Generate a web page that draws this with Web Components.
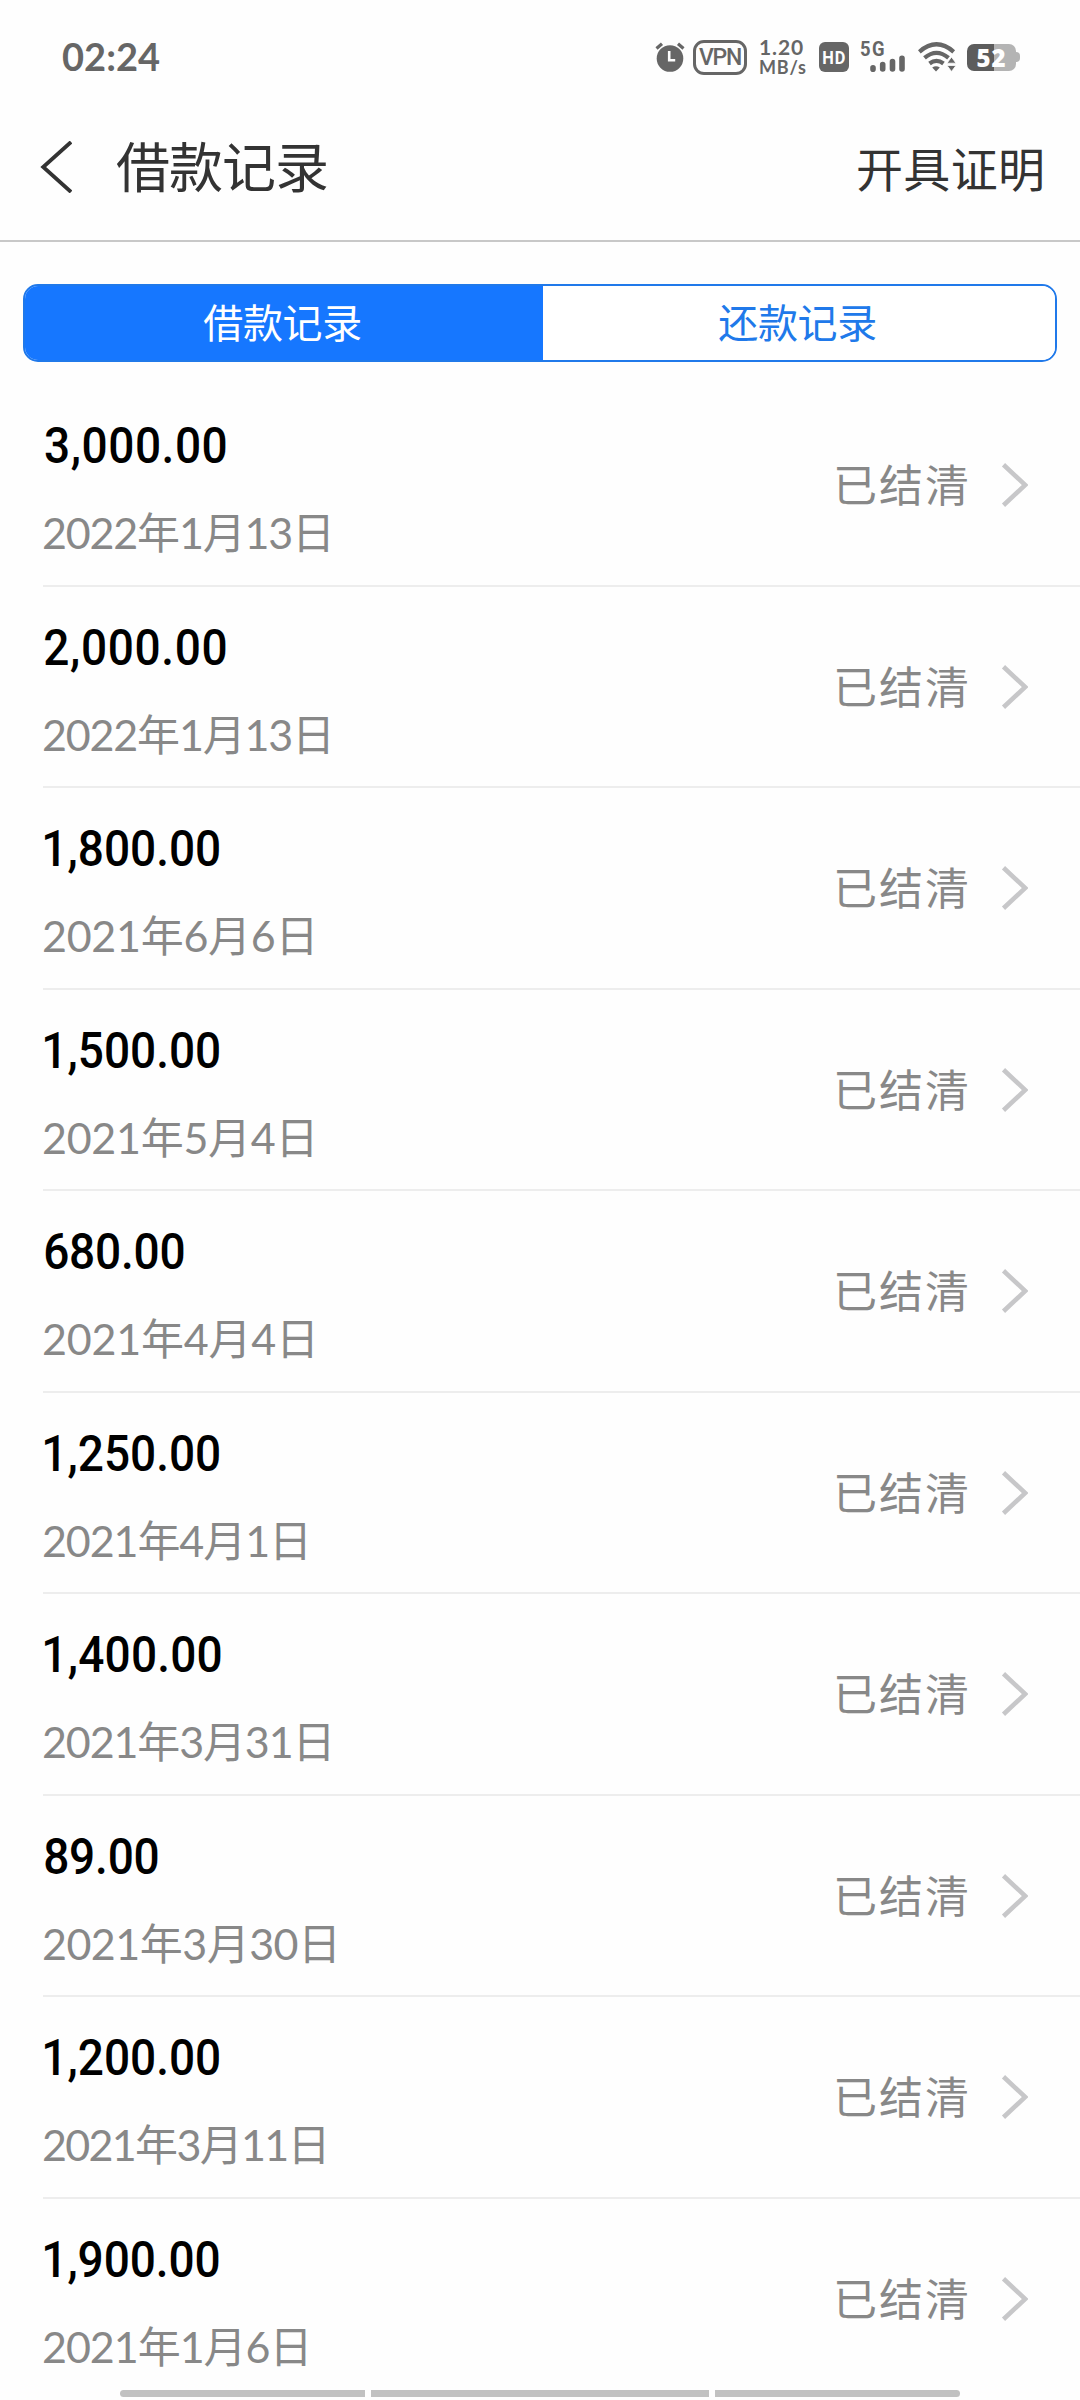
<!DOCTYPE html>
<html lang="zh-CN">
<head>
<meta charset="utf-8">
<title>借款记录</title>
<style>
html,body{margin:0;padding:0;background:#fefefe}
body{width:1080px;height:2400px;overflow:hidden;font-family:Lato,"Noto Sans CJK SC",sans-serif}
</style>
</head>
<body>
<loan-app></loan-app>
<script>
const ctx = document.createElement('canvas').getContext('2d');
const build = (el, html) => { el.attachShadow({mode:'open'}).innerHTML = html; };

/* One line of text whose drawn width is set by its "w" attribute;
   "sx" condenses the glyphs horizontally */
customElements.define('fit-text', class extends HTMLElement {
  connectedCallback(){
    if (this.shadowRoot) return;
    build(this, '<style>:host{display:block;white-space:nowrap;flex:none}</style><slot></slot>');
    const sx = +(this.getAttribute('sx') || 1);
    const w = +this.getAttribute('w'), t = this.textContent, cs = getComputedStyle(this);
    ctx.font = cs.fontWeight + ' ' + cs.fontSize + ' ' + cs.fontFamily;
    const m = ctx.measureText(t);
    const ink = m.actualBoundingBoxLeft + m.actualBoundingBoxRight;
    this.style.letterSpacing = ((w / sx - ink) / ([...t].length - 1)).toFixed(3) + 'px';
    this.style.textIndent = m.actualBoundingBoxLeft.toFixed(2) + 'px';
    this.style.width = w + 'px';
    if (sx !== 1) { this.style.transformOrigin = '0 50%'; this.style.transform = `scaleX(${sx})`; }
  }
});

customElements.define('status-bar', class extends HTMLElement {
  connectedCallback(){
    build(this, `<style>
:host{display:flex;height:115px;box-sizing:border-box;padding:0 60px 1px 62px;align-items:center;color:#666;justify-content:space-between}
.time{font:700 38px/44px Lato,sans-serif;margin-bottom:2px}
.icons{display:flex;align-items:center;height:40px}
svg{display:block;flex:none}
.vpn{box-sizing:border-box;width:54px;height:35px;border:3px solid #666;border-radius:11px;display:flex;justify-content:center;margin-left:8px;font:500 23px/30px Roboto,sans-serif}
.rate{display:flex;flex-direction:column;gap:2px;width:46px;margin:0 0 2px 13px;font:700 21px/19px Lato,sans-serif}
.rate .u{font:700 18px/18px Lato,sans-serif}
.hd{width:30px;height:30px;border-radius:6px;background:#666;color:#fefefe;margin-left:13px;display:flex;justify-content:center;font:700 19px/31px Roboto,sans-serif}
.cell{width:46px;height:30px;margin-left:11px;display:flex;flex-direction:column}
.cell fit-text{font:700 20px/15px Roboto,sans-serif;margin-left:1px}
.cell svg{margin-top:-2px}
.bat{display:flex;align-items:center;margin-left:11px}
.body{width:49px;height:27px;border-radius:7px;background:linear-gradient(90deg,#5c5c5c 0 27px,#b4b4b4 27px);color:#fefefe;display:flex;justify-content:center;font:800 24px/27px "Open Sans",sans-serif}
.nub{width:4px;height:10px;border-radius:0 4px 4px 0;background:#b4b4b4}
</style>
<fit-text class="time" w="98">02:24</fit-text>
<div class="icons">
<svg width="30" height="30" viewBox="0 0 30 30"><circle cx="15" cy="16.5" r="13.3" fill="#666"/><path d="M1.5 6.5 7 1.8M28.5 6.5 23 1.8" stroke="#666" stroke-width="3.2"/><path d="M14.2 9v9.2h6" fill="none" stroke="#fefefe" stroke-width="2.6"/></svg>
<div class="vpn"><fit-text w="42">VPN</fit-text></div>
<div class="rate"><fit-text w="43">1.20</fit-text><fit-text class="u" w="46">MB/s</fit-text></div>
<div class="hd"><fit-text w="22" sx=".86">HD</fit-text></div>
<div class="cell"><fit-text w="23" sx=".92">5G</fit-text><svg width="46" height="17" viewBox="0 0 46 17"><path d="M13 12.8v1.4M22.7 9.5v4.5M32.5 6.5v7.5M42 3.2v10.8" stroke="#666" stroke-width="5.6" stroke-linecap="round"/></svg></div>
<svg style="margin-left:12px" width="38" height="30" viewBox="0 0 38 30"><g fill="none" stroke="#666" stroke-width="4.2"><path d="M1.3 9.8Q18.5-5.2 35.7 9.8"/><path d="M6.5 15.8Q18.5 5.8 30.5 15.8"/><path d="M11.500 21.500Q18.500 16.200 25.500 21.500"/></g><path d="M18 29.500 14.200 25.500Q18 23.200 21.800 25.500Z" fill="#666"/><path d="M33.500 15 38 21.200H29ZM33.500 29.500 29 23.500H38Z" fill="#666" stroke="#fefefe" stroke-width=".8"/></svg>
<div class="bat"><div class="body"><fit-text w="28">52</fit-text></div><div class="nub"></div></div>
</div>`);
  }
});

customElements.define('nav-bar', class extends HTMLElement {
  connectedCallback(){
    build(this, `<style>
:host{display:flex;box-sizing:border-box;height:127px;border-bottom:2px solid #c8c8c8;padding:0 38px 21px 40px;align-items:center;color:#333;font-family:"Noto Sans CJK SC",sans-serif}
svg{flex:none;margin-right:44px}
.t{font-size:54px;line-height:80px;margin-bottom:4px}
.r{font-size:47px;line-height:70px;margin-left:auto}
</style>
<svg width="32" height="52" viewBox="0 0 32 52"><path d="M31 1 3.200 26 31 51" fill="none" stroke="#333" stroke-width="3.800"/></svg>
<fit-text class="t" w="211">${this.textContent}</fit-text>
<fit-text class="r" w="184">开具证明</fit-text>`);
  }
});

customElements.define('tab-switch', class extends HTMLElement {
  connectedCallback(){
    build(this, `<style>
:host{display:flex;box-sizing:border-box;margin:42px 23px 0;height:78px;border:2px solid #2079ea;border-radius:15px;overflow:hidden;font:40px/70px "Noto Sans CJK SC",sans-serif;color:#2079ea}
div{flex:none;display:flex;justify-content:center;box-sizing:border-box;padding-right:3px}
.a{width:517.500px;background:#1677ff;color:#fff}
.b{width:512.500px;background:#fff}
</style><div class="a"><fit-text w="158">借款记录</fit-text></div><div class="b"><fit-text w="158">还款记录</fit-text></div>`);
  }
});

customElements.define('loan-row', class extends HTMLElement {
  connectedCallback(){
    const g = k => this.getAttribute(k);
    build(this, `<style>
:host{display:flex;box-sizing:border-box;height:201.500px;margin-left:43px;padding:0 52px 0 1px;border-bottom:2px solid #ededed;justify-content:space-between}
:host(:last-child){border-color:transparent}
.l{display:flex;flex-direction:column;padding-top:31px}
.amt{font:500 50px/60px Roboto,sans-serif;color:#000;margin-left:1px}
.date{font:43px/60px Lato,"Noto Sans CJK SC",sans-serif;color:#888;margin-top:27px}
.s{display:flex;align-items:center;gap:34px;font:44px/60px "Noto Sans CJK SC",sans-serif;color:#888}
.s fit-text{margin-bottom:3px}
svg{margin-top:1px}
</style>
<div class="l"><fit-text class="amt" sx=".92" w="${g('aw')}">${g('amount')}</fit-text><fit-text class="date" w="${g('dw')}">${g('date')}</fit-text></div>
<div class="s"><fit-text w="130">已结清</fit-text><svg width="27" height="44" viewBox="0 0 27 44"><path d="M2.500 1.800 24.200 22 2.500 42.200" fill="none" stroke="#c7c7c9" stroke-width="4.600"/></svg></div>`);
  }
});

customElements.define('gesture-bar', class extends HTMLElement {
  connectedCallback(){
    build(this, `<style>
:host{position:absolute;left:120px;top:2390px;width:840px;height:7px;display:flex;gap:6px}
i{background:#c1c1c1;flex:none;width:245px}
.mid{flex:1}
.start{border-radius:4px 0 0 4px}
.end{border-radius:0 4px 4px 0}
</style><i class="start"></i><i class="mid"></i><i class="end"></i>`);
  }
});

const records = [
 ['3,000.00','2022年1月13日',180.5,284],['2,000.00','2022年1月13日',180.5,284],
 ['1,800.00','2021年6月6日',174,267.5],['1,500.00','2021年5月4日',174,267.5],
 ['680.00','2021年4月4日',138.5,268],['1,250.00','2021年4月1日',174,261],
 ['1,400.00','2021年3月31日',175.5,284.5],['89.00','2021年3月30日',112.5,290],
 ['1,200.00','2021年3月11日',174,279.5],['1,900.00','2021年1月6日',173.5,261.5]];

customElements.define('loan-app', class extends HTMLElement {
  connectedCallback(){
    build(this, `<style>:host{display:block;position:relative;width:1080px;height:2400px;overflow:hidden;background:#fefefe}
.list{margin-top:23px}</style>
<status-bar></status-bar><nav-bar>借款记录</nav-bar><tab-switch></tab-switch>
<div class="list">${records.map(r=>`<loan-row amount="${r[0]}" date="${r[1]}" aw="${r[2]}" dw="${r[3]}"></loan-row>`).join('')}</div>
<gesture-bar></gesture-bar>`);
  }
});
</script>
</body>
</html>
